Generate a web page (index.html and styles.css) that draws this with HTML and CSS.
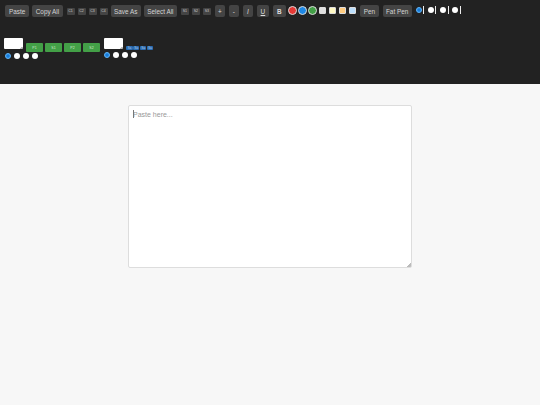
FILE: index.html
```html
<!DOCTYPE html>
<html lang="en">
<head>
<meta charset="utf-8">
<title>Paste</title>
<link rel="stylesheet" href="styles.css">
</head>
<body>
<header class="toolbar">
  <div class="row row-top">
    <button class="btn btn-paste">Paste</button>
    <button class="btn">Copy All</button>
    <div class="tiny-group"><button class="tiny">C1</button><button class="tiny">C2</button><button class="tiny">C3</button><button class="tiny">C4</button></div>
    <button class="btn">Save As</button>
    <button class="btn">Select All</button>
    <div class="tiny-group"><button class="tiny">S1</button><button class="tiny">S2</button><button class="tiny">S3</button></div>
    <div class="fmt-group">
      <button class="fmt">+</button><button class="fmt">-</button><button class="fmt fmt-i">I</button><button class="fmt fmt-u">U</button><button class="fmt fmt-b">B</button>
    </div>
    <div class="swatches">
      <span class="dot dot-red"></span><span class="dot dot-blue"></span><span class="dot dot-green"></span>
      <span class="sq sq-grey"></span><span class="sq sq-yellow"></span><span class="sq sq-orange"></span><span class="sq sq-lblue"></span>
    </div>
    <button class="btn pen">Pen</button>
    <button class="btn">Fat Pen</button>
    <div class="widths">
      <input class="radio" type="radio" name="w" checked><i class="bar"></i>
      <input class="radio" type="radio" name="w"><i class="bar"></i>
      <input class="radio" type="radio" name="w"><i class="bar"></i>
      <input class="radio" type="radio" name="w"><i class="bar"></i>
    </div>
  </div>
  <div class="row row-bottom">
    <div class="group group-1">
      <div class="group-top">
        <textarea class="mini"></textarea>
        <div class="greens"><button class="green">P1</button><button class="green">S1</button><button class="green">P2</button><button class="green">S2</button></div>
      </div>
      <div class="radios"><input class="radio" type="radio" name="a" checked><input class="radio" type="radio" name="a"><input class="radio" type="radio" name="a"><input class="radio" type="radio" name="a"></div>
    </div>
    <div class="group group-2">
      <div class="group-top">
        <textarea class="mini"></textarea>
        <div class="blues"><button class="blue">Sa</button><button class="blue">Sa</button><button class="blue">Sa</button><button class="blue">Sa</button></div>
      </div>
      <div class="radios"><input class="radio" type="radio" name="b" checked><input class="radio" type="radio" name="b"><input class="radio" type="radio" name="b"><input class="radio" type="radio" name="b"></div>
    </div>
  </div>
</header>
<main class="main">
  <div class="paste-wrap">
    <textarea class="paste" placeholder="Paste here..."></textarea>
  </div>
</main>
</body>
</html>
```
FILE: styles.css
```css
* { box-sizing: border-box; }
html, body { margin: 0; height: 100%; }
body { background: #f7f7f7; font-family: "Liberation Sans", Arial, sans-serif; }
button { font-family: inherit; border: 0; padding: 0; cursor: pointer; }

.toolbar { background: #222; height: 84px; padding: 5px 0 0 5px; }
.row { display: flex; }
.row-top { align-items: center; height: 12px; }
.row-bottom { margin-top: 21px; margin-left: -1px; align-items: flex-start; }

.btn { height: 12px; padding: 0 3.4px; margin-right: 3px; background: #444; color: #d4d4d4; font-size: 6.4px; border-radius: 2px; white-space: nowrap; }
.btn-paste { padding: 0 4px; }
.pen { margin-right: 4px; }
.tiny-group { display: flex; gap: 3px; margin: 0 3px 0 1px; }
.tiny { width: 8px; height: 7px; background: #444; color: #ccc; font-size: 3.5px; border-radius: 1px; }
.fmt-group { display: flex; gap: 4px; margin-left: 1px; }
.fmt { width: 10px; height: 12px; background: #444; color: #ddd; font-size: 6.4px; border-radius: 2px; }
.fmt-i { font-style: italic; }
.fmt-u { text-decoration: underline; width: 12px; }
.fmt-b { font-weight: bold; width: 13px; }

.swatches { display: flex; align-items: center; margin: 0 4px 1px 2.5px; }
.dot { width: 9px; height: 9px; border-radius: 50%; border: 1px solid #ddd; margin-right: 1px; }
.dot-red { background: #e53935; }
.dot-blue { background: #1e88e5; }
.dot-green { background: #43a047; margin-right: 2px; }
.sq { width: 7px; height: 7px; border: 1px solid #ddd; margin-right: 3px; border-radius: 1px; }
.sq-grey { background: #e0e0e0; }
.sq-yellow { background: #fff9c4; }
.sq-orange { background: #ffcc80; }
.sq-lblue { background: #bbdefb; margin-right: 0; }

.radio { appearance: none; width: 6px; height: 6px; margin: 0; background: #fff; border-radius: 50%; flex: none; }
.radio:checked { background: #1976d2; border: 1px solid #64b5f6; box-shadow: inset 0 0 0 1px #1e88e5; }
.widths { display: flex; align-items: center; margin: 0 0 2px 1px; }
.widths .radio { margin-right: 1.5px; }
.bar { width: 1px; height: 8px; background: #eee; margin-right: 3.7px; }

.group { display: flex; flex-direction: column; }
.group-top { display: flex; align-items: flex-start; }
.mini { display: block; width: 19px; height: 11px; margin: 0; padding: 0; border: 0; background: #fff linear-gradient(135deg, transparent 50%, #bbb 50%) no-repeat right bottom / 3px 3px; border-radius: 1px; resize: none; }
.radios { display: flex; gap: 3px; margin-top: 1px; margin-left: 1px; }
.greens { display: flex; gap: 2px; margin: 5px 0 0 3px; }
.green { width: 17px; height: 9px; background: #43a047; color: #cfe8cf; font-size: 3.5px; border-radius: 1px; }
.group-2 { margin-left: 4px; }
.group-2 .radios { margin-top: 2px; margin-left: 0; }
.blues { display: flex; gap: 0.4px; margin: 8px 0 0 3px; }
.blue { width: 6.5px; height: 4px; line-height: 4px; background: #2a6db5; color: #bcd; font-size: 3px; border-radius: 1px; }

.main { display: flex; justify-content: center; padding-top: 21px; }
.paste-wrap { position: relative; }
.paste-wrap::after { content: ""; position: absolute; left: 5px; top: 5px; width: 1px; height: 8px; background: #777; }
.paste { display: block; width: 284px; height: 163px; margin: 0; padding: 4px; border: 1px solid #ddd; border-radius: 2px; background: #fff linear-gradient(135deg, transparent 50%, #bbb 50%) no-repeat right bottom / 4px 4px; color: #333; font: 7px/1.3 "Liberation Sans", Arial, sans-serif; outline: none; resize: none; }
.paste::placeholder { color: #999; }
```
